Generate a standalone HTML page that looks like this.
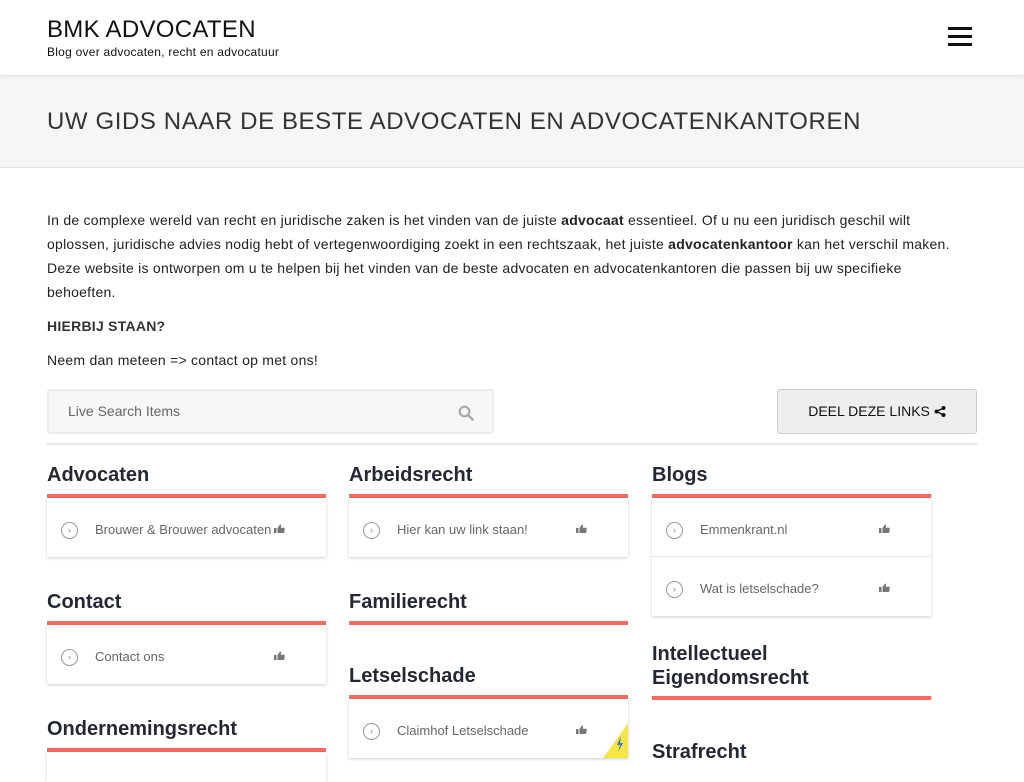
<!DOCTYPE html>
<html><head><meta charset="utf-8"><style>
*{margin:0;padding:0;box-sizing:border-box}
body{width:1024px;height:768px;overflow:hidden;background:#fff;font-family:"Liberation Sans",sans-serif;color:#222;position:relative}
.a{position:absolute}
.hdr{left:0;top:0;width:1024px;height:75px;background:#fff;box-shadow:0 1px 3px rgba(0,0,0,.12);z-index:2}
.band{left:0;top:75px;width:1024px;height:93px;background:#f5f6f5;border-bottom:1px solid #e4e4e4}
p.t{font-size:14px;line-height:24px;color:#222;letter-spacing:.25px;white-space:nowrap}
.h{font-size:20px;font-weight:bold;color:#232834;line-height:24px}
.bar{height:4px;background:#f96a5f;width:279px}
.card{width:279px;background:#fff;box-shadow:0 1px 3px rgba(0,0,0,.2)}
.row{height:59px;position:relative;font-size:13px;color:#666;border-bottom:1px solid #e8e8e8}
.row:last-child{border-bottom:none}
.row .c{position:absolute;left:14px;top:24px;width:17px;height:17px;border:1px solid #999;border-radius:50%;font-size:9px;line-height:15px;text-align:center;color:#888}
.row .l{position:absolute;left:48px;top:24px}
.row .u{position:absolute;left:227px;top:26px;width:11px;height:9px}
</style></head><body>
<div class="a hdr">
 <div class="a" style="left:47px;top:16px;font-size:24px;color:#111;letter-spacing:.3px">BMK ADVOCATEN</div>
 <div class="a" style="left:47px;top:45px;font-size:12px;color:#111;letter-spacing:.25px">Blog over advocaten, recht en advocatuur</div>
 <div class="a" style="left:948px;top:27px;width:24px;height:3px;background:#111"></div>
 <div class="a" style="left:948px;top:35px;width:24px;height:3px;background:#111"></div>
 <div class="a" style="left:948px;top:43px;width:24px;height:3px;background:#111"></div>
</div>
<div class="a band"><div class="a" style="left:47px;top:33px;font-size:24px;color:#333;letter-spacing:.6px">UW GIDS NAAR DE BESTE ADVOCATEN EN ADVOCATENKANTOREN</div></div>
<div class="a" style="left:47px;top:208px;width:930px">
<p class="t">In de complexe wereld van recht en juridische zaken is het vinden van de juiste <b>advocaat</b> essentieel. Of u nu een juridisch geschil wilt<br>oplossen, juridische advies nodig hebt of vertegenwoordiging zoekt in een rechtszaak, het juiste <b>advocatenkantoor</b> kan het verschil maken.<br>Deze website is ontworpen om u te helpen bij het vinden van de beste advocaten en advocatenkantoren die passen bij uw specifieke<br>behoeften.</p>
<p class="t" style="margin-top:10px;font-weight:bold;color:#333">HIERBIJ STAAN?</p>
<p class="t" style="margin-top:10px">Neem dan meteen =&gt; contact op met ons!</p>
</div>
<div class="a" style="left:47px;top:389px;width:447px;height:45px;background:#f7f7f7;border:2px solid #ececec;border-radius:3px">
 <div class="a" style="left:19px;top:12px;font-size:14px;color:#666">Live Search Items</div>
 <svg class="a" style="left:409px;top:14px" width="16" height="16" viewBox="0 0 16 16"><circle cx="6.5" cy="6.5" r="4.8" fill="none" stroke="#aaa" stroke-width="2.2"/><path d="M10 10l4.5 4.5" stroke="#aaa" stroke-width="2.6" stroke-linecap="round"/></svg>
</div>
<div class="a" style="left:777px;top:389px;width:200px;height:45px;background:#eee;border:1px solid #ccc;border-radius:3px;font-size:14px;color:#111;text-align:center;line-height:43px">DEEL DEZE LINKS <svg width="12" height="11" viewBox="0 0 12 11" style="vertical-align:-1px"><circle cx="9.5" cy="2" r="2" fill="#111"/><circle cx="9.5" cy="9" r="2" fill="#111"/><circle cx="2.5" cy="5.5" r="2" fill="#111"/><path d="M2.5 5.5L9.5 2M2.5 5.5L9.5 9" stroke="#111" stroke-width="1.4"/></svg></div>
<div class="a" style="left:47px;top:443px;width:930px;height:2px;background:#e8e8e8"></div>

<div class="a h" style="left:47px;top:463px">Advocaten</div>
<div class="a bar" style="left:47px;top:494px"></div>
<div class="a card" style="left:47px;top:498px"><div class="row"><span class="c">›</span><span class="l">Brouwer &amp; Brouwer advocaten</span><svg class="u" viewBox="0 0 11 9"><rect x="0" y="4" width="2.5" height="5" fill="#777"/><path d="M3.5 4L6 0.5c1 0 1.3.6 1 2L6.7 3.8H10c.8 0 1 .8.6 1.3l-.2 3.2c-.2.5-.6.7-1 .7H3.5z" fill="#777"/></svg></div></div>
<div class="a h" style="left:47px;top:590px">Contact</div>
<div class="a bar" style="left:47px;top:621px"></div>
<div class="a card" style="left:47px;top:625px"><div class="row"><span class="c">›</span><span class="l">Contact ons</span><svg class="u" viewBox="0 0 11 9"><rect x="0" y="4" width="2.5" height="5" fill="#777"/><path d="M3.5 4L6 0.5c1 0 1.3.6 1 2L6.7 3.8H10c.8 0 1 .8.6 1.3l-.2 3.2c-.2.5-.6.7-1 .7H3.5z" fill="#777"/></svg></div></div>
<div class="a h" style="left:47px;top:717px">Ondernemingsrecht</div>
<div class="a bar" style="left:47px;top:748px"></div>
<div class="a card" style="left:47px;top:752px;height:30px"></div>

<div class="a h" style="left:349px;top:463px">Arbeidsrecht</div>
<div class="a bar" style="left:349px;top:494px"></div>
<div class="a card" style="left:349px;top:498px"><div class="row"><span class="c">›</span><span class="l">Hier kan uw link staan!</span><svg class="u" viewBox="0 0 11 9"><rect x="0" y="4" width="2.5" height="5" fill="#777"/><path d="M3.5 4L6 0.5c1 0 1.3.6 1 2L6.7 3.8H10c.8 0 1 .8.6 1.3l-.2 3.2c-.2.5-.6.7-1 .7H3.5z" fill="#777"/></svg></div></div>
<div class="a h" style="left:349px;top:590px">Familierecht</div>
<div class="a bar" style="left:349px;top:621px"></div>
<div class="a h" style="left:349px;top:664px">Letselschade</div>
<div class="a bar" style="left:349px;top:695px"></div>
<div class="a card" style="left:349px;top:699px"><div class="row"><span class="c">›</span><span class="l">Claimhof Letselschade</span><svg class="u" viewBox="0 0 11 9"><rect x="0" y="4" width="2.5" height="5" fill="#777"/><path d="M3.5 4L6 0.5c1 0 1.3.6 1 2L6.7 3.8H10c.8 0 1 .8.6 1.3l-.2 3.2c-.2.5-.6.7-1 .7H3.5z" fill="#777"/></svg>
<svg class="a" style="left:254px;top:24px" width="25" height="35" viewBox="0 0 25 35"><path d="M25 0V35H0z" fill="#f5e642"/><path d="M18 13l-4 9h3l-2 7 5-9h-3z" fill="#3a73d8"/></svg></div></div>

<div class="a h" style="left:652px;top:463px">Blogs</div>
<div class="a bar" style="left:652px;top:494px"></div>
<div class="a card" style="left:652px;top:498px">
<div class="row"><span class="c">›</span><span class="l">Emmenkrant.nl</span><svg class="u" viewBox="0 0 11 9"><rect x="0" y="4" width="2.5" height="5" fill="#777"/><path d="M3.5 4L6 0.5c1 0 1.3.6 1 2L6.7 3.8H10c.8 0 1 .8.6 1.3l-.2 3.2c-.2.5-.6.7-1 .7H3.5z" fill="#777"/></svg></div>
<div class="row"><span class="c">›</span><span class="l">Wat is letselschade?</span><svg class="u" viewBox="0 0 11 9"><rect x="0" y="4" width="2.5" height="5" fill="#777"/><path d="M3.5 4L6 0.5c1 0 1.3.6 1 2L6.7 3.8H10c.8 0 1 .8.6 1.3l-.2 3.2c-.2.5-.6.7-1 .7H3.5z" fill="#777"/></svg></div></div>
<div class="a h" style="left:652px;top:642px">Intellectueel<br>Eigendomsrecht</div>
<div class="a bar" style="left:652px;top:696px"></div>
<div class="a h" style="left:652px;top:740px">Strafrecht</div>
</body></html>
